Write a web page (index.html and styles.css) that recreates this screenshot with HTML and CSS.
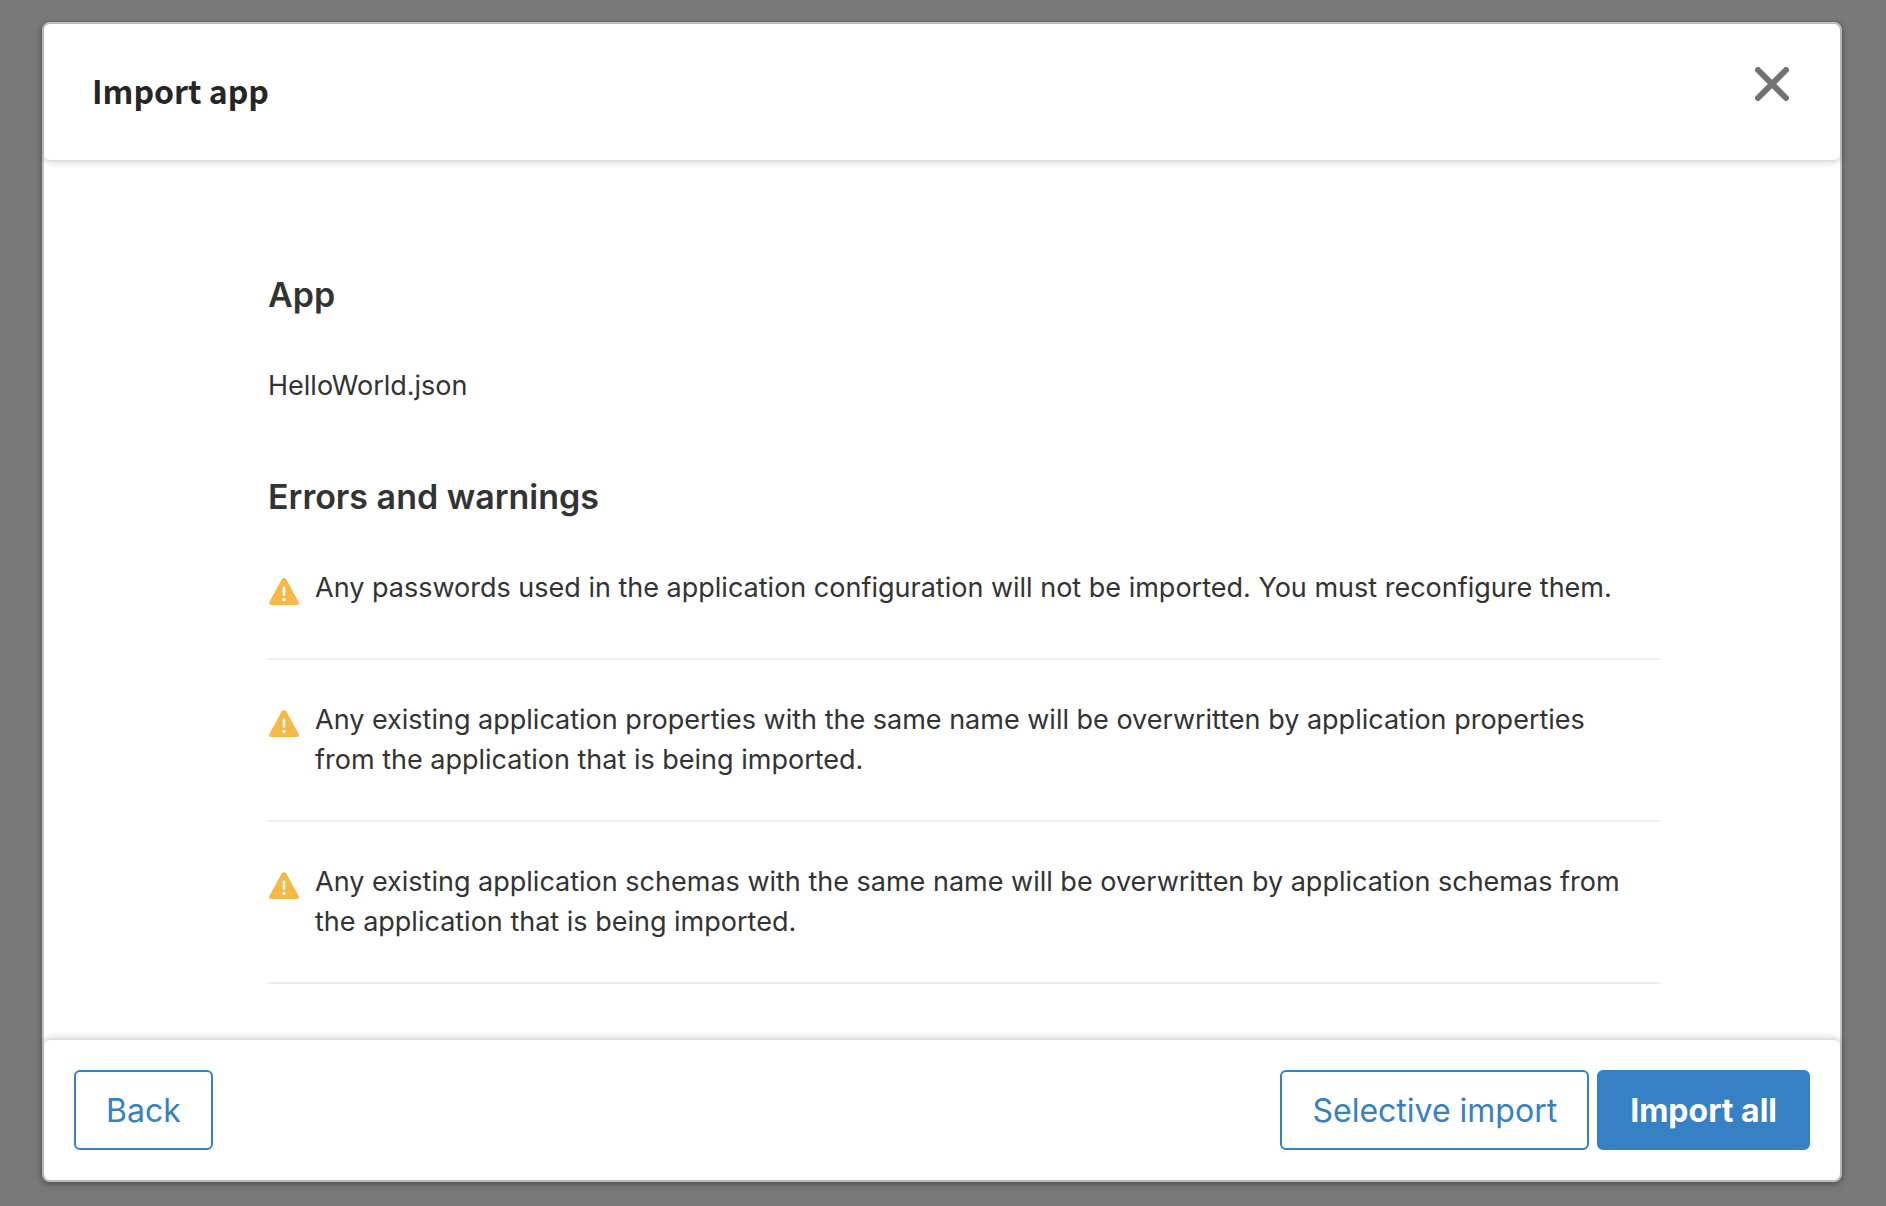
FILE: index.html
```html
<!DOCTYPE html>
<html lang="en">
<head>
  <meta charset="utf-8">
  <meta name="viewport" content="width=device-width, initial-scale=1">
  <title>Import app</title>
  <link rel="stylesheet" href="styles.css">
</head>
<body>
  <svg class="sprite" aria-hidden="true">
    <symbol id="icon-warning" viewBox="0 0 30 27">
      <path fill="#f4b947" d="M12.600 1.500C13.700-.3 16.300-.3 17.400 1.500L29.600 23.900C30.400 25.400 29.500 27 27.800 27H2.200C.5 27-.4 25.400.4 23.900Z"/>
      <path stroke="#fff" stroke-width="2.600" stroke-linecap="round" d="M15 9.800V16.600"/>
      <circle cx="15" cy="21.500" r="1.700" fill="#fff"/>
    </symbol>
  </svg>
  <div class="modal" role="dialog" aria-modal="true" aria-labelledby="modal-title">
    <header class="modal-header">
      <h1 class="modal-title" id="modal-title">Import app</h1>
      <button class="close" type="button" aria-label="Close">
        <svg class="close-icon" viewBox="0 0 34 34" aria-hidden="true">
          <path fill="none" stroke="#727272" stroke-width="6" stroke-linecap="round" d="M3 3L31 31M31 3L3 31"/>
        </svg>
      </button>
    </header>
    <main class="modal-body">
      <h2 class="section-title">App</h2>
      <p class="file-name">HelloWorld.json</p>
      <h2 class="section-title">Errors and warnings</h2>
      <ul class="messages">
        <li class="message">
          <svg class="message-icon" aria-hidden="true"><use href="#icon-warning"/></svg>
          <p class="message-text">Any passwords used in the application configuration will not be imported. You must reconfigure them.</p>
        </li>
        <li class="message">
          <svg class="message-icon" aria-hidden="true"><use href="#icon-warning"/></svg>
          <p class="message-text">Any existing application properties with the same name will be overwritten by application properties from the application that is being imported.</p>
        </li>
        <li class="message">
          <svg class="message-icon" aria-hidden="true"><use href="#icon-warning"/></svg>
          <p class="message-text">Any existing application schemas with the same name will be overwritten by application schemas from the application that is being imported.</p>
        </li>
      </ul>
    </main>
    <footer class="modal-footer">
      <button class="button" type="button">Back</button>
      <div class="actions">
        <button class="button" type="button">Selective import</button>
        <button class="button button-primary" type="button">Import all</button>
      </div>
    </footer>
  </div>
</body>
</html>
```

FILE: styles.css
```css
* {
  box-sizing: border-box;
}

body {
  display: flex;
  min-height: 100vh;
  margin: 0;
  padding: 22px 44px 24px 42px;
  background: #797979;
  color: #333;
  font-family: Inter, "Liberation Sans", sans-serif;
  font-size: 27px;
  line-height: 40px;
}

h1,
h2,
p,
ul {
  margin: 0;
  padding: 0;
}

.sprite {
  position: absolute;
  width: 0;
  height: 0;
}

.modal {
  display: flex;
  flex: 1;
  flex-direction: column;
  border: 2px solid #c4c4c4;
  border-radius: 8px;
  background: #fff;
  box-shadow: 0 2px 6px rgba(0, 0, 0, 0.35);
}

.modal-header {
  display: flex;
  align-items: flex-start;
  justify-content: space-between;
  padding: 43px 51px 47px 48px;
  border-radius: 6px;
  box-shadow: 0 2px 6px rgba(0, 0, 0, 0.2);
}

.modal-title {
  color: #262626;
  font-family: "Noto Sans CJK SC", "Noto Sans", sans-serif;
  font-size: 32px;
  font-weight: 700;
  line-height: 46px;
}

.close {
  display: flex;
  padding: 0;
  border: 0;
  background: none;
  cursor: pointer;
}

.close-icon {
  width: 34px;
  height: 34px;
}

.modal-body {
  flex: 1;
  padding: 112px 180px 56px 224px;
}

.section-title {
  margin-bottom: 48px;
  font-size: 34px;
  font-weight: 600;
  line-height: 46px;
}

.file-name {
  margin-bottom: 68px;
}

.messages {
  list-style: none;
}

.message {
  display: flex;
  gap: 16px;
  padding: 40px 16px 40px 0;
  border-bottom: 2px solid #eee;
}

.message:first-child {
  padding-top: 0;
  padding-bottom: 50px;
}

.message-icon {
  flex: none;
  width: 30px;
  height: 27px;
  margin: 10px 0 0 1px;
}

.modal-footer {
  display: flex;
  justify-content: space-between;
  padding: 30px;
  border-radius: 6px;
  box-shadow: 0 -2px 6px rgba(0, 0, 0, 0.2);
}

.actions {
  display: flex;
  gap: 8px;
}

.button {
  height: 80px;
  padding: 2px 30px 0;
  border: 2px solid #3680c6;
  border-radius: 6px;
  background: #fff;
  color: #3680c6;
  font: inherit;
  font-size: 32px;
  cursor: pointer;
}

.button-primary {
  padding: 2px 31px 0;
  background: #3680c6;
  color: #fff;
  font-weight: 700;
}
```
